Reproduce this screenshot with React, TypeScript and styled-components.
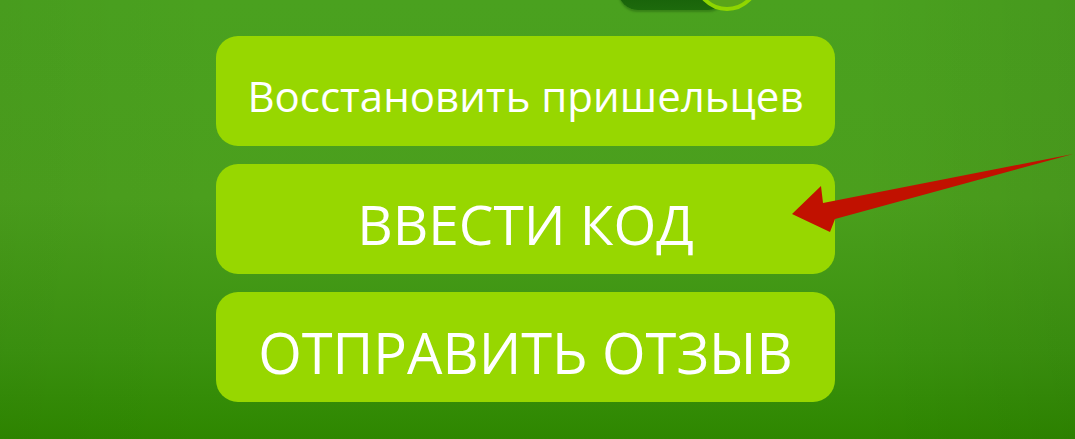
import styled, { createGlobalStyle } from 'styled-components';

const GlobalStyle = createGlobalStyle`
  html, body {
    margin: 0;
    padding: 0;
    width: 1075px;
    height: 439px;
    overflow: hidden;
  }
  body {
    font-family: 'Open Sans', 'Noto Sans', sans-serif;
  }
`;

const menuItems = [
  { label: 'Восстановить пришельцев', size: 42 },
  { label: 'ВВЕСТИ КОД', size: 55 },
  { label: 'ОТПРАВИТЬ ОТЗЫВ', size: 56 },
];

function App() {
  return (
    <>
      <GlobalStyle />
      <Screen>
        <Menu>
          <Toggle>
            <Track />
            <Knob />
          </Toggle>
          {menuItems.map((item) => (
            <MenuButton key={item.label} $size={item.size}>
              {item.label}
            </MenuButton>
          ))}
        </Menu>
        <Arrow viewBox="0 0 1075 439" aria-hidden="true">
          <polygon points="792,214 821,186 823,203 1073,154 835,219 830,232" />
        </Arrow>
      </Screen>
    </>
  );
}

export default App;

const Screen = styled.div`
  position: relative;
  width: 1075px;
  height: 439px;
  overflow: hidden;
  background:
    linear-gradient(90deg, rgba(0, 0, 0, 0.03) 0%, rgba(0, 0, 0, 0) 20%, rgba(0, 0, 0, 0) 80%, rgba(0, 0, 0, 0.05) 100%),
    linear-gradient(180deg, #4aa11f 0%, #4b9f1d 45%, #3b920f 80%, #2e8700 100%);
`;

const Menu = styled.div`
  display: flex;
  flex-direction: column;
  gap: 18px;
  width: 619px;
  padding-left: 216px;
`;

const Toggle = styled.div`
  position: relative;
  width: 142px;
  height: 70px;
  margin: -59px 0 7px 402px;
`;

const Track = styled.div`
  position: absolute;
  left: 0;
  bottom: 1px;
  width: 110px;
  height: 40px;
  border-radius: 20px;
  background: linear-gradient(180deg, #0f5206 0%, #1d6a0c 100%);
  box-shadow: 0 2px 2px rgba(0, 40, 0, 0.25);
`;

const Knob = styled.div`
  position: absolute;
  right: 0;
  bottom: 0;
  width: 58px;
  height: 58px;
  border-radius: 50%;
  border: 4px solid #8fd600;
  background: #5aa519;
`;

const MenuButton = styled.button<{ $size: number }>`
  display: flex;
  align-items: center;
  justify-content: center;
  height: 110px;
  border: none;
  border-radius: 22px;
  background: #97d700;
  color: #ffffff;
  font-family: 'Open Sans', 'Noto Sans', sans-serif;
  font-size: ${(p) => p.$size}px;
  font-weight: 400;
  padding: 9px 0 0;
  cursor: pointer;
`;

const Arrow = styled.svg`
  position: absolute;
  left: 0;
  top: 0;
  width: 1075px;
  height: 439px;
  pointer-events: none;

  polygon {
    fill: #c11100;
  }
`;
